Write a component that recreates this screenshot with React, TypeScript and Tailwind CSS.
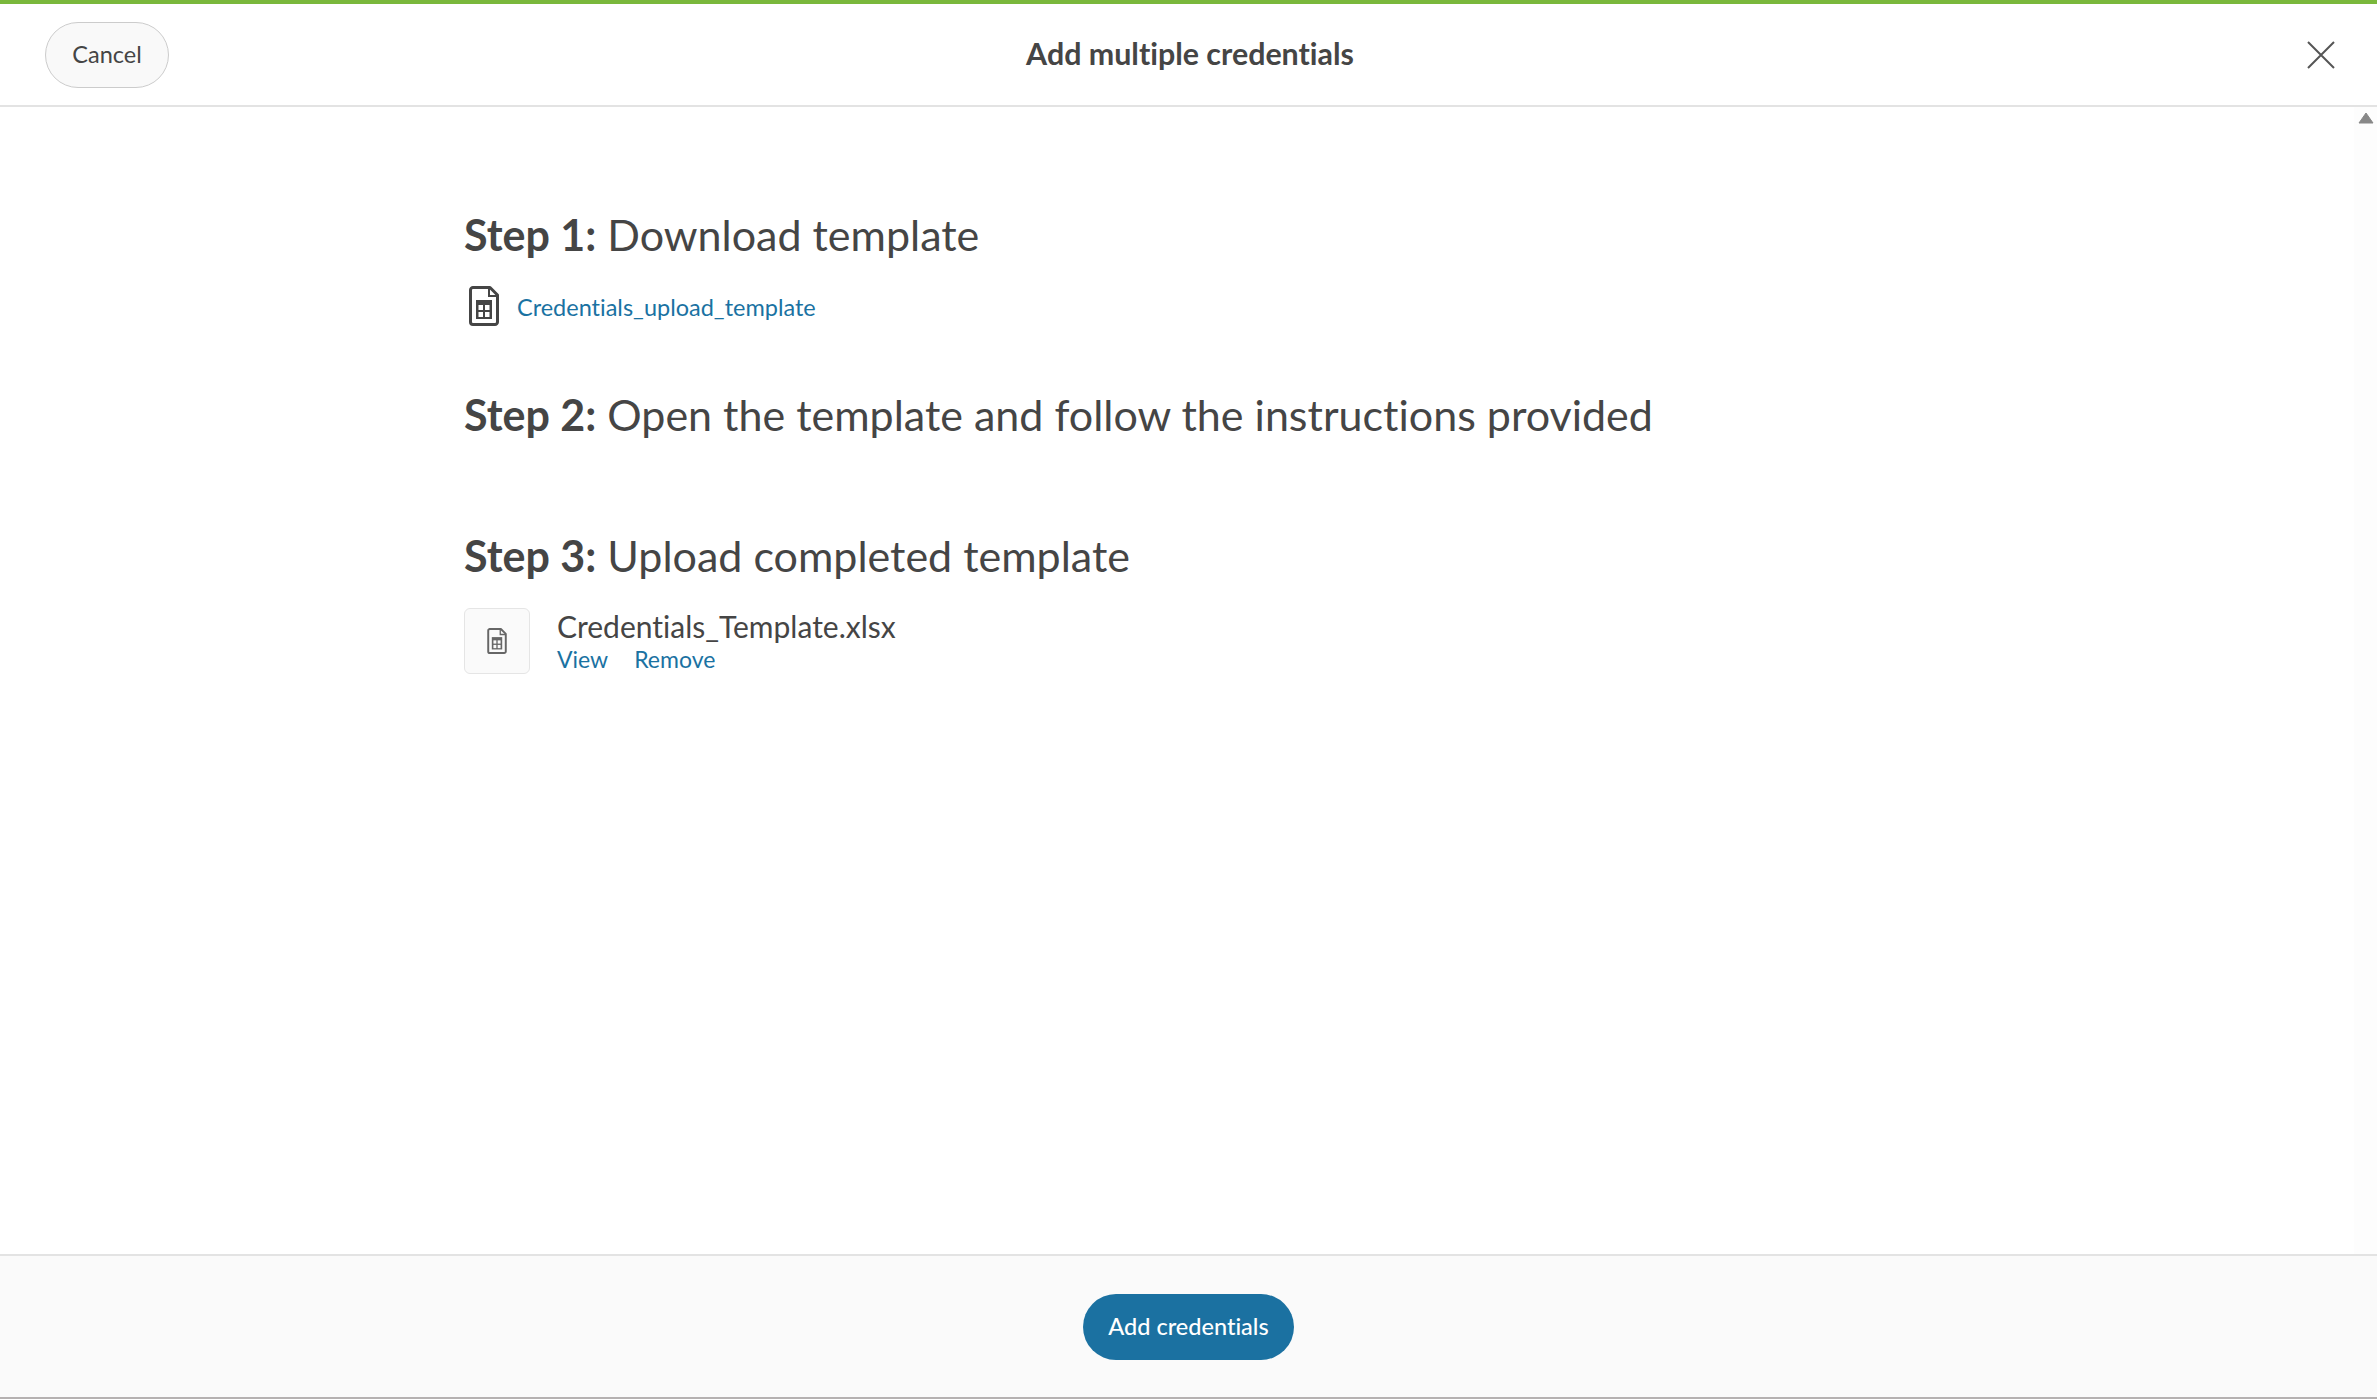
function SheetIcon({ className, cut = "#fff" }: { className: string; cut?: string }) {
  return (
    <svg viewBox="0 0 30 40" fill="none" className={className}>
      <path d="M3.5 1.5H21L28.5 9V36a2.5 2.5 0 0 1-2.5 2.5H4A2.5 2.5 0 0 1 1.5 36V4A2.5 2.5 0 0 1 4 1.5Z" stroke="currentColor" strokeWidth="3" strokeLinejoin="round" />
      <path d="M20 2v8h8" stroke="currentColor" strokeWidth="2" />
      <rect x="7" y="14" width="16" height="19" fill="currentColor" />
      <rect x="9.5" y="19" width="4.5" height="5" fill={cut} />
      <rect x="16" y="19" width="4.5" height="5" fill={cut} />
      <rect x="9.5" y="26" width="4.5" height="5" fill={cut} />
      <rect x="16" y="26" width="4.5" height="5" fill={cut} />
    </svg>
  );
}

export default function App() {
  return (
    <div className="flex h-[1399px] w-full flex-col overflow-hidden bg-white font-['Lato','Liberation_Sans',sans-serif] text-[#454545] [font-variant-ligatures:none]">
      <div className="h-[4px] shrink-0 bg-[#7ab83c]" />
      <header className="grid h-[103px] shrink-0 grid-cols-[1fr_auto_1fr] items-center border-b-2 border-[#e3e3e3] pl-[45px] pr-[42px]">
        <button className="h-[66px] w-[124px] justify-self-start rounded-full border border-[#cccccc] bg-[#f9f9f9] text-[23.5px] text-[#454545]">Cancel</button>
        <h1 className="pb-[3px] text-[30.4px] font-bold leading-none">Add multiple credentials</h1>
        <button aria-label="Close" className="flex h-[28px] w-[28px] items-center justify-center justify-self-end">
          <svg viewBox="0 0 28 28" className="h-[28px] w-[28px]" stroke="#555555" strokeWidth="2" fill="none">
            <path d="M1 1l26 26M27 1L1 27" />
          </svg>
        </button>
      </header>
      <div className="flex min-h-0 flex-1">
        <main className="min-w-0 flex-1 pl-[464px] pt-[105px]">
          <h2 className="h-[46px] text-[43px] leading-[46px]"><b>Step 1:</b> Download template</h2>
          <div className="mt-[28px] flex h-[40px] items-center">
            <SheetIcon className="ml-[5px] h-[40px] w-[30px] text-[#454545]" />
            <a className="ml-[18px] pt-[3px] text-[23.5px] text-[#1a72a2]">Credentials_upload_template</a>
          </div>
          <h2 className="mt-[66px] h-[46px] text-[43px] leading-[46px]"><b>Step 2:</b> Open the template and follow the instructions provided</h2>
          <h2 className="mt-[95px] h-[46px] text-[43px] leading-[46px]"><b>Step 3:</b> Upload completed template</h2>
          <div className="mt-[29px] flex">
            <div className="flex h-[66px] w-[66px] items-center justify-center rounded-[6px] border border-[#e5e5e5] bg-[#fafafa]">
              <SheetIcon cut="#fafafa" className="h-[26px] w-[20px] text-[#666666]" />
            </div>
            <div className="ml-[27px] flex flex-col">
              <div className="pt-[1px] text-[30px] leading-[34px]">Credentials_Template.xlsx</div>
              <div className="mt-[1px] flex gap-[26px] text-[23px] leading-[30px] text-[#1a72a2]">
                <a>View</a>
                <a>Remove</a>
              </div>
            </div>
          </div>
        </main>
        <div className="flex w-[23px] shrink-0 justify-center bg-[#fdfdfd] pt-[5px]">
          <svg viewBox="0 0 16 12" className="h-[12px] w-[16px]"><path d="M8 1L15 11H1Z" fill="#888888" stroke="#888888" strokeLinejoin="round" /></svg>
        </div>
      </div>
      <footer className="flex h-[145px] shrink-0 items-center justify-center border-b-2 border-t-2 border-b-[#b5b1b1] border-t-[#e3e3e3] bg-[#fafafa]">
        <button className="h-[66px] w-[211px] rounded-full bg-[#1b71a1] text-[23.5px] font-medium text-white">Add credentials</button>
      </footer>
    </div>
  );
}
